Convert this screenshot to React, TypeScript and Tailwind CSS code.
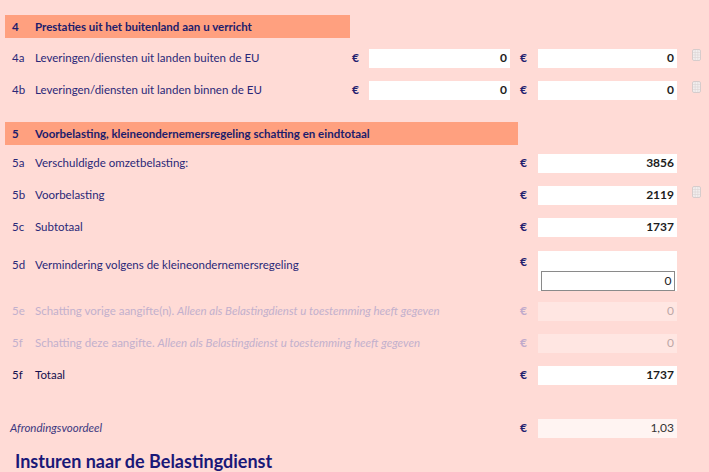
import React from "react";

type Row = {
  code: string;
  label: React.ReactNode;
  values: (string | null)[];
  icon?: boolean;
  muted?: boolean;
  strong?: boolean;
};

const CalcIcon = () => (
  <svg width="9" height="12" viewBox="0 0 9 12" className="block">
    <rect x="0.5" y="0.5" width="8" height="11" rx="1.5" fill="#f2eeee" stroke="#d6cccc" />
    <path d="M3.2 1v10M5.8 1v10M1 3.5h7M1 6h7M1 8.5h7" stroke="#dcd4d4" strokeWidth="0.6" />
  </svg>
);

const Euro = ({ muted }: { muted?: boolean }) => (
  <span className={`text-[12px] font-bold ${muted ? "text-[#c0aacb]" : "text-[#23206e]"}`}>€</span>
);

const Field = ({ value, muted, width }: { value: string; muted?: boolean; width: string }) => (
  <div
    className={`${width} h-[19px] flex items-center justify-end pr-[3px] text-[12px] ${
      muted ? "bg-[#ffe6e2] text-[#bda6a6]" : "bg-white font-bold text-[#1c1c1c]"
    }`}
  >
    {value}
  </div>
);

const rows4: Row[] = [
  { code: "4a", label: "Leveringen/diensten uit landen buiten de EU", values: ["0", "0"], icon: true },
  { code: "4b", label: "Leveringen/diensten uit landen binnen de EU", values: ["0", "0"], icon: true },
];

const rows5: Row[] = [
  { code: "5a", label: "Verschuldigde omzetbelasting:", values: [null, "3856"] },
  { code: "5b", label: "Voorbelasting", values: [null, "2119"], icon: true },
  { code: "5c", label: "Subtotaal", values: [null, "1737"] },
];

const LineRow = ({ row }: { row: Row }) => {
  const tone = row.muted ? "text-[#c2b0cd]" : row.strong ? "text-[#14104f]" : "text-[#2a2878]";
  return (
    <div className="flex items-center h-8">
      <span className={`w-[23px] ${tone}`}>{row.code}</span>
      <span className={`w-[317px] whitespace-nowrap ${tone}`}>{row.label}</span>
      {row.values[0] !== null ? (
        <>
          <span className="w-[17px]">
            <Euro />
          </span>
          <Field value={row.values[0]} width="w-[141px]" />
          <span className="w-[10px]" />
        </>
      ) : (
        <span className="w-[168px]" />
      )}
      <span className="w-[18px]">
        <Euro muted={row.muted} />
      </span>
      <Field value={row.values[1] ?? ""} muted={row.muted} width="w-[139px]" />
      {row.icon && (
        <span className="ml-[15px] -mt-[6px]">
          <CalcIcon />
        </span>
      )}
    </div>
  );
};

const SectionHead = ({ code, title, width }: { code: string; title: string; width: string }) => (
  <div className={`${width} ml-[5px] h-[23px] flex items-center bg-[#ffa07f] font-bold text-[#201c6c]`}>
    <span className="w-[30px] pl-[7px]">{code}</span>
    <span>{title}</span>
  </div>
);

export default function App() {
  return (
    <div
      className="w-[709px] h-[472px] overflow-hidden bg-[#ffdbd6] text-[11.5px] pl-[7px] pt-[15px]"
      style={{ fontFamily: "Lato, 'Open Sans', sans-serif" }}
    >
      <div className="-ml-[7px]">
        <SectionHead code="4" title="Prestaties uit het buitenland aan u verricht" width="w-[345px]" />
      </div>
      <div className="pl-[5px] mt-[4px]">
        {rows4.map((r) => (
          <LineRow key={r.code} row={r} />
        ))}
      </div>

      <div className="-ml-[7px] mt-[16px]">
        <SectionHead code="5" title="Voorbelasting, kleineondernemersregeling schatting en eindtotaal" width="w-[513px]" />
      </div>

      <div className="pl-[5px] mt-[2px]">
        {rows5.map((r) => (
          <LineRow key={r.code} row={r} />
        ))}

        {/* 5d: value box holds a nested bordered input */}
        <div className="flex items-start h-12">
          <span className="w-[23px] pt-[13px] text-[#2a2878]">5d</span>
          <span className="w-[485px] pt-[13px] text-[#2a2878]">Vermindering volgens de kleineondernemersregeling</span>
          <span className="w-[18px] pt-[10px]">
            <Euro />
          </span>
          <div className="w-[139px] h-[40px] mt-[8px] bg-white flex flex-col justify-end items-center">
            <div className="w-[134px] h-[20px] border border-[#8a8a8a] flex items-center justify-end pr-[2px] text-[12px] text-[#1c1c1c]">
              0
            </div>
          </div>
        </div>

        <div className="mt-[4px]">
          <LineRow
            row={{
              code: "5e",
              label: (
                <>
                  Schatting vorige aangifte(n). <i>Alleen als Belastingdienst u toestemming heeft gegeven</i>
                </>
              ),
              values: [null, "0"],
              muted: true,
            }}
          />
          <LineRow
            row={{
              code: "5f",
              label: (
                <>
                  Schatting deze aangifte. <i>Alleen als Belastingdienst u toestemming heeft gegeven</i>
                </>
              ),
              values: [null, "0"],
              muted: true,
            }}
          />
          <LineRow row={{ code: "5f", label: "Totaal", values: [null, "1737"], strong: true }} />
        </div>

        <div className="flex items-center h-8 mt-[21px]">
          <span className="w-[508px] -ml-[2px] mr-[2px] italic text-[#3c3880]">Afrondingsvoordeel</span>
          <span className="w-[18px]">
            <Euro />
          </span>
          <div className="w-[139px] h-[19px] flex items-center justify-end pr-[3px] bg-[#fff4f2] text-[12px] text-[#333]">
            1,03
          </div>
        </div>
      </div>

      <h2 className="ml-[8px] mt-[6px] text-[18px] leading-[22px] font-bold text-[#1a1878]">
        Insturen naar de Belastingdienst
      </h2>
    </div>
  );
}
